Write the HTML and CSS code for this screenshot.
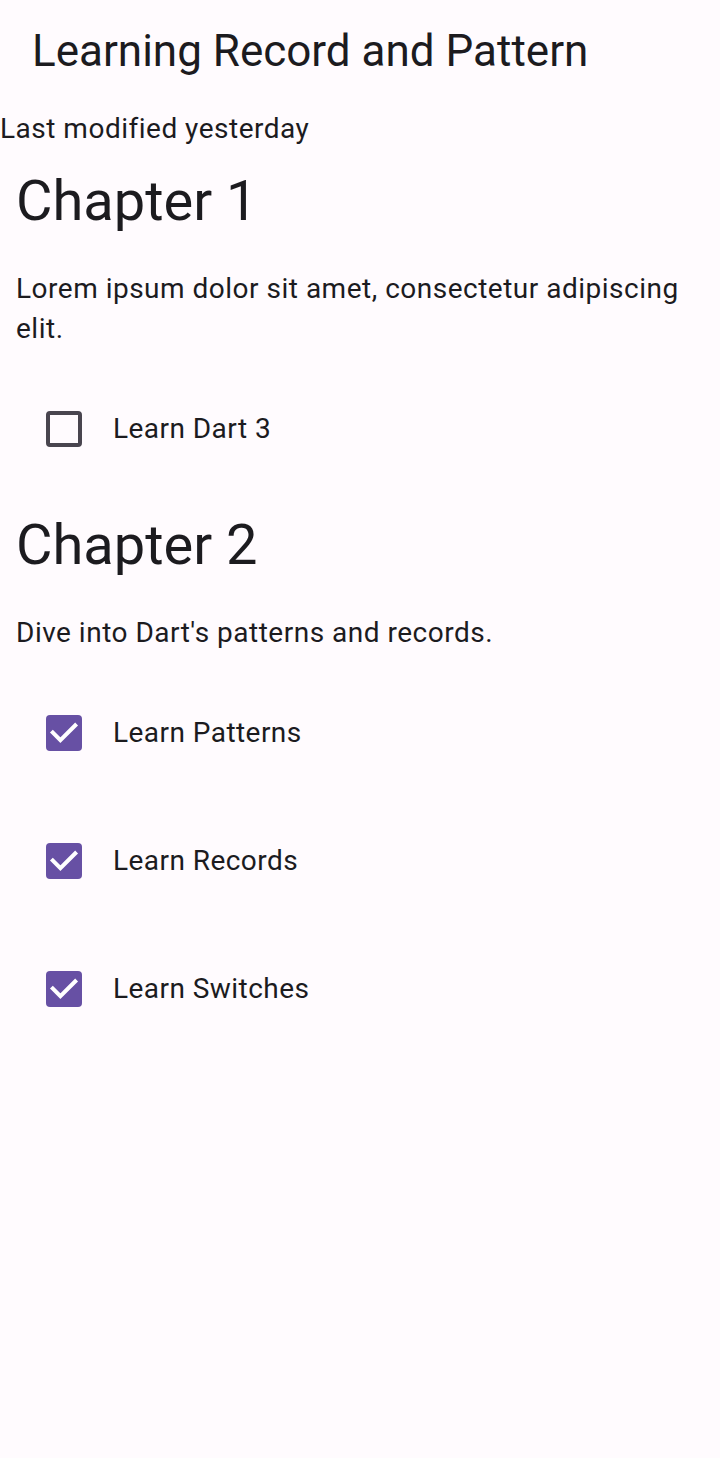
FILE: index.html
```html
<!DOCTYPE html>
<html lang="en">
<head>
<meta charset="utf-8">
<title>Learning Record and Pattern</title>
<link rel="stylesheet" href="styles.css">
</head>
<body>
<div class="app">
  <header class="appbar">
    <h1 class="appbar-title">Learning Record and Pattern</h1>
  </header>
  <main class="content">
    <p class="modified">Last modified yesterday</p>

    <section class="chapter">
      <h2 class="chapter-title">Chapter 1</h2>
      <p class="chapter-desc">Lorem ipsum dolor sit amet, consectetur adipiscing elit.</p>
      <ul class="tasks">
        <li class="task">
          <span class="checkbox"></span>
          <span class="task-label">Learn Dart 3</span>
        </li>
      </ul>
    </section>

    <section class="chapter chapter-next">
      <h2 class="chapter-title">Chapter 2</h2>
      <p class="chapter-desc">Dive into Dart's patterns and records.</p>
      <ul class="tasks">
        <li class="task">
          <span class="checkbox checked"><svg viewBox="0 0 36 36" width="36" height="36"><path d="M5.4 16.2 L14.4 25.2 L30.6 9" fill="none" stroke="#ffffff" stroke-width="4"/></svg></span>
          <span class="task-label">Learn Patterns</span>
        </li>
        <li class="task">
          <span class="checkbox checked"><svg viewBox="0 0 36 36" width="36" height="36"><path d="M5.4 16.2 L14.4 25.2 L30.6 9" fill="none" stroke="#ffffff" stroke-width="4"/></svg></span>
          <span class="task-label">Learn Records</span>
        </li>
        <li class="task">
          <span class="checkbox checked"><svg viewBox="0 0 36 36" width="36" height="36"><path d="M5.4 16.2 L14.4 25.2 L30.6 9" fill="none" stroke="#ffffff" stroke-width="4"/></svg></span>
          <span class="task-label">Learn Switches</span>
        </li>
      </ul>
    </section>
  </main>
</div>
</body>
</html>
```

FILE: styles.css
```css
html, body {
  margin: 0;
  padding: 0;
  background: #FFFBFE;
}

body {
  font-family: Roboto, "Noto Sans", "Liberation Sans", sans-serif;
  color: #1C1B1F;
}

.app {
  min-height: 1458px;
  background: #FFFBFE;
}

.appbar {
  height: 109px;
  box-sizing: border-box;
  padding: 23px 32px 0 32px;
}

.appbar-title {
  margin: 0;
  font-size: 44px;
  line-height: 56px;
  font-weight: 400;
  letter-spacing: 0;
}

.content {
  display: flex;
  flex-direction: column;
}

.modified {
  margin: 0;
  font-size: 28px;
  line-height: 40px;
  letter-spacing: 0.5px;
}

.chapter {
  padding: 16px 16px 0 16px;
  display: flex;
  flex-direction: column;
}

.chapter-next {
  padding-top: 16px;
}

.chapter-title {
  margin: 0;
  font-size: 56px;
  line-height: 72px;
  font-weight: 400;
  letter-spacing: 0;
}

.chapter-desc {
  margin: 32px 0 0 0;
  font-size: 28px;
  line-height: 40px;
  letter-spacing: 0.5px;
}

.tasks {
  list-style: none;
  margin: 16px 0 0 0;
  padding: 0;
}

.task {
  height: 128px;
  display: flex;
  align-items: center;
  padding-left: 30px;
}

.checkbox {
  width: 36px;
  height: 36px;
  box-sizing: border-box;
  border: 4px solid #49454F;
  border-radius: 4px;
  flex: none;
  display: block;
}

.checkbox.checked {
  border: none;
  background: #6750A4;
}

.checkbox svg {
  display: block;
}

.task-label {
  margin-left: 31px;
  font-size: 28px;
  line-height: 40px;
  letter-spacing: 0.45px;
}
```
